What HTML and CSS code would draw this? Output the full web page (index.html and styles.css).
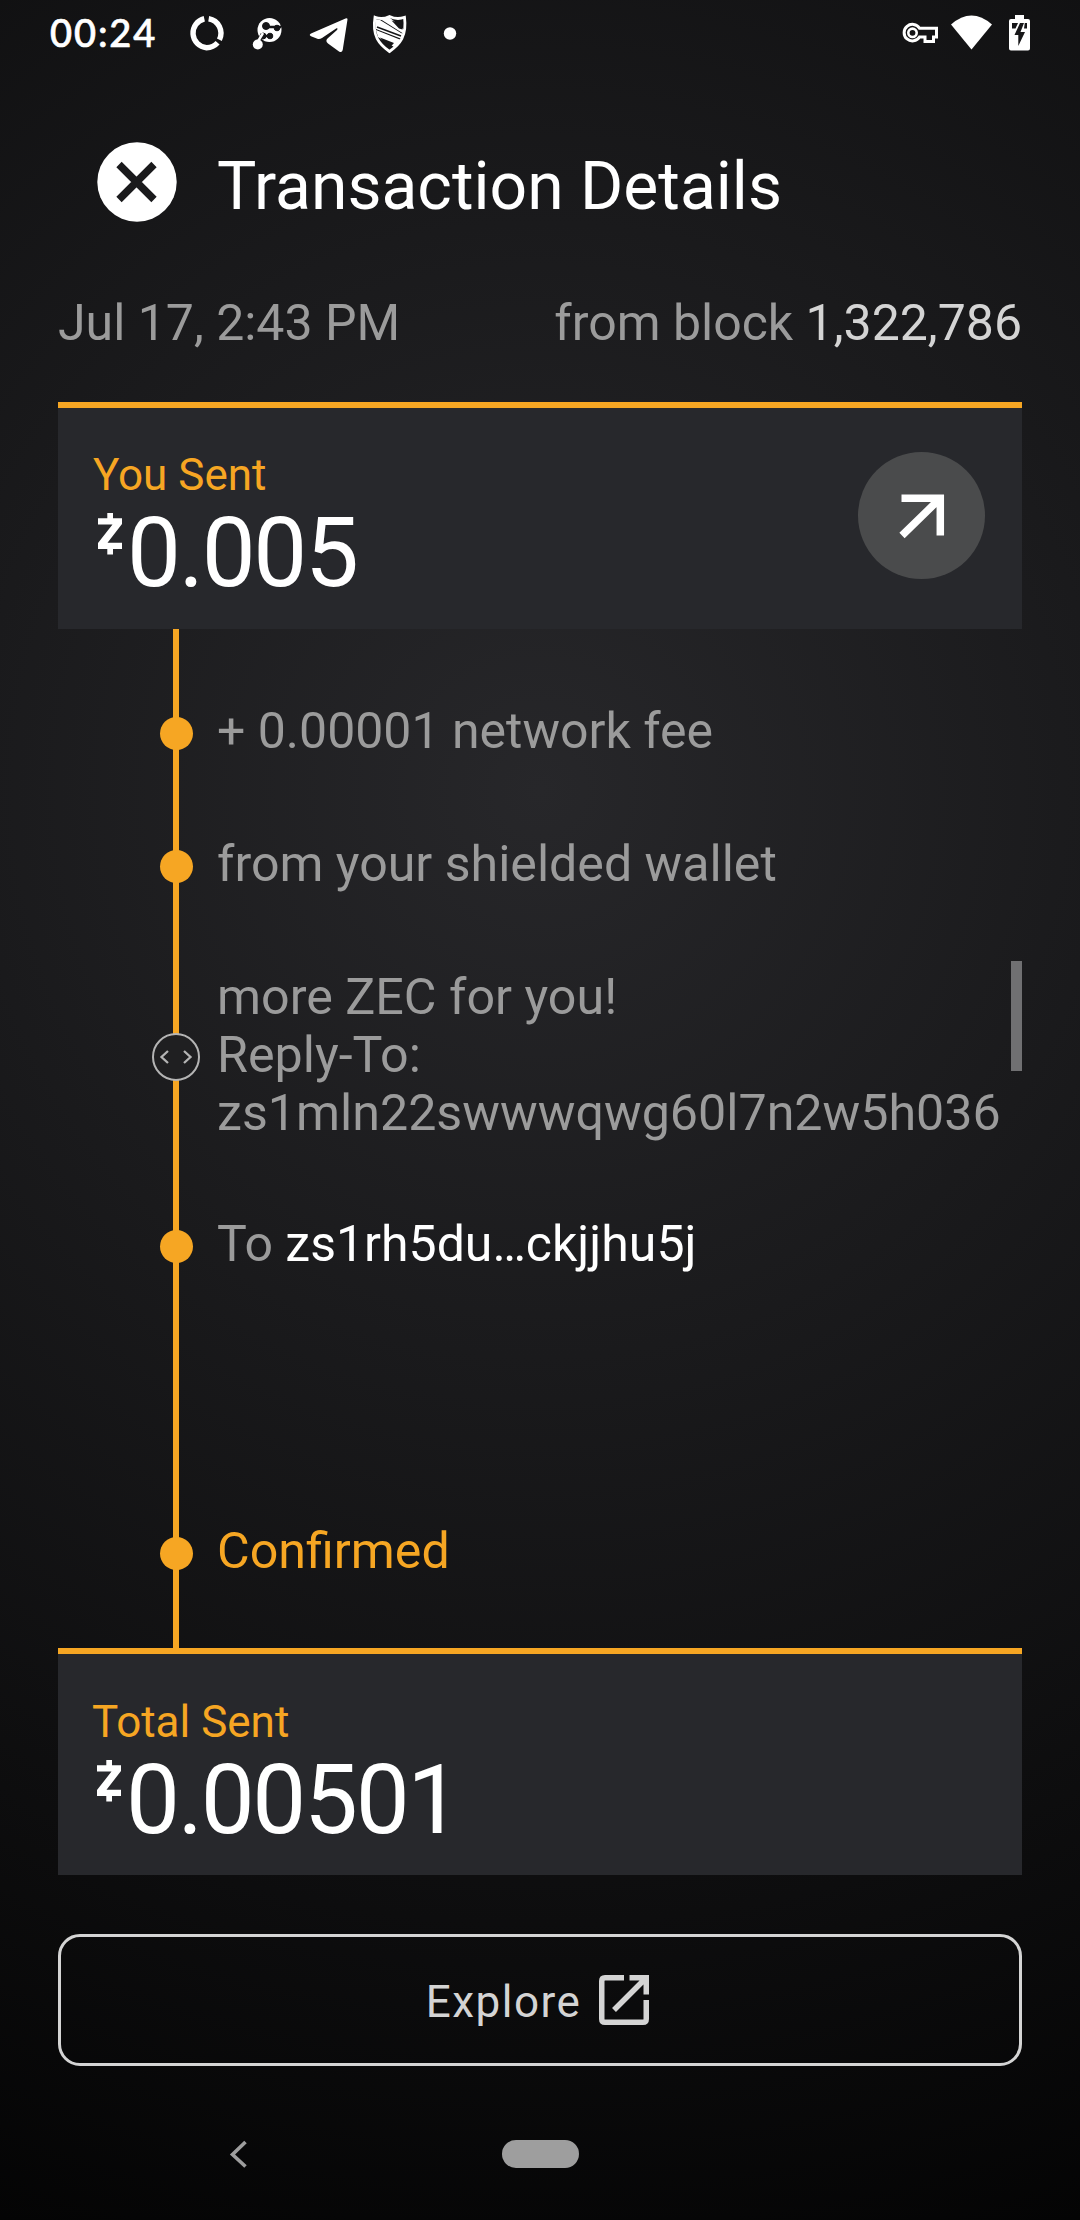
FILE: index.html
```html
<!DOCTYPE html>
<html lang="en">
<head>
<meta charset="utf-8">
<title>Transaction Details</title>
<link rel="stylesheet" href="styles.css">
</head>
<body>
<div class="screen">
  <div class="status">
    <span class="clock">00:24</span>
    <svg class="s-left" width="290" height="44" viewBox="180 12 290 44" fill="#fff">
      <g fill="none" stroke="#fff" stroke-width="5.4">
        <path d="M204.300 18.750A14.700 14.700 0 0 0 206.500 47.700A14.700 14.700 0 0 0 217.600 42.800"/>
        <path d="M208.700 18.750A14.700 14.700 0 0 1 219.400 39.800"/>
      </g>
      <circle cx="269.500" cy="30" r="12"/>
      <g fill="#161618" stroke="#161618">
        <circle cx="266" cy="26" r="3.500"/><circle cx="277" cy="28" r="2.800"/><circle cx="270" cy="36" r="2.800"/><circle cx="263" cy="36" r="3"/>
        <path d="M266 27H281M262 36H270M262 35L256 43" fill="none" stroke-width="2.500"/>
      </g>
      <path d="M263 33L257 43" stroke="#fff" stroke-width="2.500"/>
      <circle cx="257.800" cy="44.500" r="5"/>
      <path d="M347.500 19.500Q347.500 17.500 345.500 18.500L311 33.500Q308.500 35 311 36.200L318 39Q320 39.400 322 38L336.500 28.300Q338.500 28 337 30L327.500 38.500Q325 41 328 43.500L339 51.500Q342 53 342.700 50Z"/>
      <path fill="none" stroke="#fff" stroke-width="2.800" d="M375 17.300Q382 20 389.500 16.500Q397 20 404.500 17.300C407 36 400 44 389.500 51.500C379 44 372 36 375 17.300Z"/>
      <path d="M375 19L380 20L401 33L404 34L402 39L376 29ZM376 30L401 40L394 47L378 37Z"/>
      <path d="M381 19.500L389 17L404 29.500V34Z"/>
      <path stroke="#161618" stroke-width="1.600" d="M377 27L401 36"/>
      <path fill="#161618" d="M391.500 20.500Q398 23 403 21.500L402.500 29.500L399 28.500ZM380 37.500L394 43L389.500 48Z"/>
      <circle cx="450" cy="33.500" r="6.200"/>
    </svg>
    <svg class="s-right" width="130" height="44" viewBox="900 12 130 44" fill="#fff">
      <path fill="none" stroke="#fff" stroke-width="3" d="M919.500 28.300A8.300 8.300 0 1 0 919.500 37H925V41.500H933.500V37H936.500V28.300Z"/>
      <circle cx="912.500" cy="32.800" r="4.200" fill="none" stroke="#fff" stroke-width="2.600"/>
      <path d="M951 24.500Q971.500 6.500 992 24.500L971.500 49.500Z"/>
      <path d="M1015 15H1024V19H1028Q1030 19 1030 21V48.500Q1030 50.500 1028 50.500H1011Q1009 50.500 1009 48.500V21Q1009 19 1011 19H1015Z"/>
      <path fill="#161618" d="M1020 23L1014.500 35H1018.300V46L1025 32H1020.500L1024 23ZM1012 23H1018L1015.500 28.500H1012ZM1024.800 23H1027V28.500H1024Z"/>
    </svg>
  </div>

  <header class="header">
    <svg class="close" width="80" height="80" viewBox="0 0 80 80"><circle cx="40" cy="40" r="39.700" fill="#fff"/><path d="M22 22.500L57 57.500M57 22.500L22 57.500" stroke="#1a1a1c" stroke-width="7.500"/></svg>
    <h1 class="title">Transaction Details</h1>
  </header>

  <div class="meta"><span>Jul 17, 2:43 PM</span><span>from block <span class="block">1,322,786</span></span></div>

  <section class="card">
    <div>
      <div class="label">You Sent</div>
      <div class="amount"><svg class="zec" width="24" height="42" viewBox="0 0 24 42"><path fill="#fff" d="M9.300 0H15V5.300H24V11L9.500 29.800H24V36H15V41.500H9.300V36H0V30L14.500 11.600H0V5.300H9.300Z"/></svg><span class="value">0.005</span></div>
    </div>
    <div class="sent"><svg width="48" height="48" viewBox="0 0 48 48" fill="none" stroke="#fff" stroke-width="7.500"><path d="M3.500 6.250H42.300V43.500M42 6.500L4 43.500"/></svg></div>
  </section>

  <ol class="timeline">
    <li class="row"><span class="dot"></span><span>+ 0.00001 network fee</span></li>
    <li class="row wallet"><span class="dot"></span><span>from your shielded wallet</span></li>
    <li class="row memo"><svg class="expand" width="48" height="48" viewBox="0 0 48 48" fill="none"><circle cx="24" cy="24" r="23" fill="#1f1f21" stroke="#b4b4b4" stroke-width="2"/><path d="M16 18L9.500 24L16 30M32 18L38.500 24L32 30" stroke="#b4b4b4" stroke-width="2.300"/></svg><span>more ZEC for you!<br>Reply-To:<br>zs1mln22swwwqwg60l7n2w5h036</span><i class="scroll"></i></li>
    <li class="row to"><span class="dot"></span><span>To <span class="address">zs1rh5du…ckjjhu5j</span></span></li>
    <li class="row confirmed"><span class="dot"></span><span>Confirmed</span></li>
  </ol>

  <section class="card total">
    <div>
      <div class="label">Total Sent</div>
      <div class="amount"><svg class="zec" width="24" height="42" viewBox="0 0 24 42"><path fill="#fff" d="M9.300 0H15V5.300H24V11L9.500 29.800H24V36H15V41.500H9.300V36H0V30L14.500 11.600H0V5.300H9.300Z"/></svg><span class="value">0.00501</span></div>
    </div>
  </section>

  <button class="explore"><span class="explore-text">Explore</span><svg width="50" height="50" viewBox="0 0 50 50" fill="none" stroke="#d4d4d4" stroke-width="5.500"><path d="M25 2.750H6Q2.750 2.750 2.750 6V44Q2.750 47.250 6 47.250H44Q47.250 47.250 47.250 44V25"/><path d="M30.500 2.750H47.250V19.500M46 4L15 35"/></svg></button>

  <nav class="nav">
    <svg class="back" width="20" height="28" viewBox="0 0 20 28"><path d="M16.500 2L3.500 14.500L16.500 26.500" fill="none" stroke="#9e9e9e" stroke-width="3.600"/></svg>
    <span class="home"></span>
  </nav>
</div>
</body>
</html>
```
FILE: styles.css
```css
* { box-sizing: border-box; margin: 0; padding: 0; }
body { background: #000; font-family: Roboto, sans-serif; }
svg { display: block; flex: none; }

.screen {
  width: 1080px;
  height: 2220px;
  display: flex;
  flex-direction: column;
  background: radial-gradient(circle 1700px at 540px 790px, #27272a 0%, #000 100%);
  color: #9b9b9b;
  overflow: hidden;
}

.status { height: 68px; flex: none; display: flex; align-items: flex-start; padding: 12px 50px 0 50px; }
.clock { width: 130px; margin-top: -2px; font: 500 38px/44px Lato, sans-serif; letter-spacing: 1.900px; color: #fff; -webkit-text-stroke: 0.700px #fff; }
.s-right { margin-left: auto; }

.header { height: 228px; flex: none; display: flex; align-items: flex-start; padding: 74px 0 0 97px; }
.title { margin: 5px 0 0 40px; font-size: 66px; font-weight: 400; line-height: 80px; color: #fff; }

.meta { height: 106px; flex: none; display: flex; justify-content: space-between; padding-left: 58px; padding-right: 58px; font-size: 50px; line-height: 54px; }
.block { color: #d4d4d4; }

.card {
  height: 227px;
  flex: none;
  margin: 0 58px;
  padding: 0 37px 0 35px;
  display: flex;
  justify-content: space-between;
  align-items: flex-start;
  background: #27282c;
  border-top: 6px solid #f6a623;
}
.label { padding-top: 40px; font-size: 44px; line-height: 54px; color: #f6a623; }
.amount { display: flex; color: #fff; }
.value { font-size: 96px; line-height: 102px; letter-spacing: -2.300px; }
.zec { margin: 11px 5px 0 5px; }
.sent { width: 127px; height: 127px; margin-top: 44px; border-radius: 50%; background: #4a4b4c; display: grid; place-items: center; }
.total { padding-left: 34px; }
.total .label { padding-top: 41px; }

.timeline {
  height: 1019px;
  flex: none;
  margin: 0 58px;
  padding-top: 73px;
  list-style: none;
  font-size: 50px;
  line-height: 58px;
  background: linear-gradient(#f6a623, #f6a623) 115px 0 / 6px 100% no-repeat;
}
.row { height: 58px; margin-bottom: 75px; display: flex; align-items: center; white-space: nowrap; }
.dot { width: 33px; height: 33px; flex: none; margin: 4px 24px 0 102px; border-radius: 50%; background: #f6a623; }
.wallet { font-size: 50.100px; }
.memo { height: 174px; margin-bottom: 73px; font-size: 50.200px; }
.expand { margin: 4px 17px 0 94px; }
.scroll { width: 11px; height: 110px; margin: -7px 0 0 auto; align-self: flex-start; background: #707072; }
.address { color: #fff; }
.to { margin-bottom: 249px; }
.confirmed { margin: 0; font-size: 50.200px; color: #f6a623; }

.explore {
  height: 132px;
  flex: none;
  margin: 59px 58px 0;
  padding-right: 5px;
  display: flex;
  justify-content: center;
  align-items: center;
  gap: 18px;
  border: 3px solid #d4d4d4;
  border-radius: 22px;
  background: none;
  font: 400 44px/52px Roboto, sans-serif;
  letter-spacing: 1.500px;
  color: #d4d4d4;
}
.explore-text { padding-top: 4px; }

.nav { height: 154px; display: flex; align-items: flex-start; padding: 74px 0 0 229px; }
.home { width: 77px; height: 28px; margin-left: 253px; border-radius: 14px; background: #9e9e9e; }
```
